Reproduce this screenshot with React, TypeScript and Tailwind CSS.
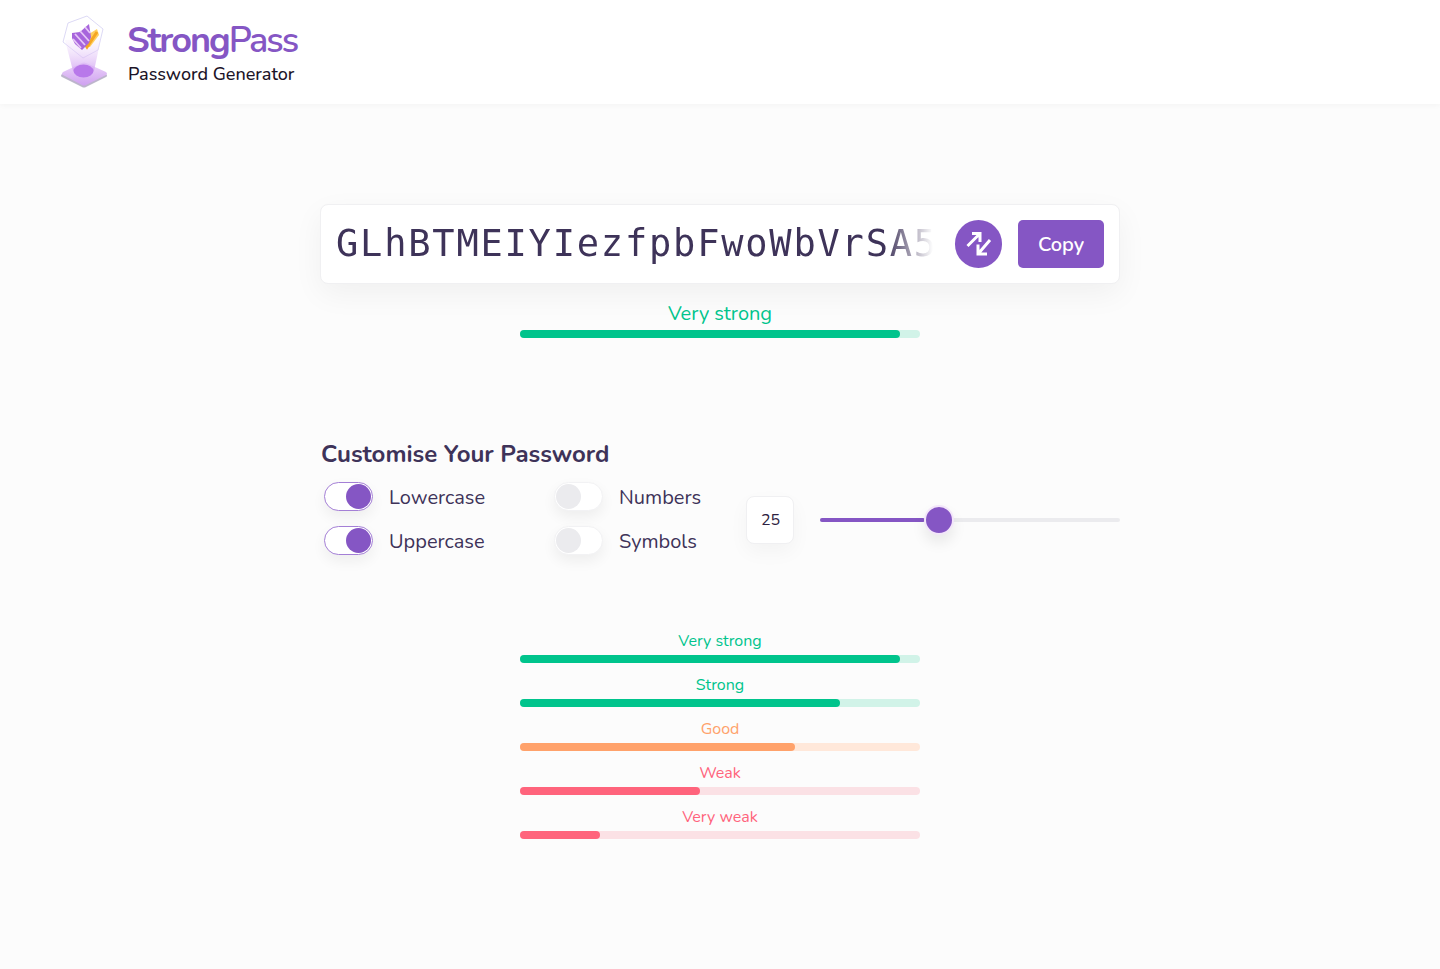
import { ReactNode } from 'react'

const strengths = [
  { label: 'Very strong', width: 'w-[380px]', text: 'text-[#00c48c]', bar: 'bg-[#00c48c]', track: 'bg-[#d1f3e8]' },
  { label: 'Strong', width: 'w-[320px]', text: 'text-[#00c48c]', bar: 'bg-[#00c48c]', track: 'bg-[#d1f3e8]' },
  { label: 'Good', width: 'w-[275px]', text: 'text-[#ffa26b]', bar: 'bg-[#ffa26b]', track: 'bg-[#ffe8da]' },
  { label: 'Weak', width: 'w-[180px]', text: 'text-[#ff647c]', bar: 'bg-[#ff647c]', track: 'bg-[#fbe1e5]' },
  { label: 'Very weak', width: 'w-[80px]', text: 'text-[#ff647c]', bar: 'bg-[#ff647c]', track: 'bg-[#fbe1e5]' },
]

function Logo() {
  return (
    <svg width="50" height="76" viewBox="0 0 50 76" fill="none">
      <defs>
        <linearGradient id="beam" x1="0" y1="0" x2="0" y2="1">
          <stop offset="0" stopColor="#f3e6fb" stopOpacity="0.2" />
          <stop offset="1" stopColor="#cf9df2" stopOpacity="0.85" />
        </linearGradient>
        <linearGradient id="plate" x1="0" y1="0" x2="0" y2="1">
          <stop offset="0" stopColor="#ecd6fa" />
          <stop offset="1" stopColor="#cfa0f0" />
        </linearGradient>
      </defs>
      <path d="M3 60 L23 50 Q25 49 27 50 L47 60 Q49 62 47 63 L27 73 Q25 74 23 73 L3 63 Q1 62 3 60 Z" fill="#bdb5cc" />
      <path d="M4 58 L23 49 Q25 48 27 49 L47 58 Q49 60 47 61 L27 71 Q25 72 23 71 L4 61 Q2 60 4 58 Z" fill="url(#plate)" />
      <path d="M28 2 L44 15 L39 36 L24 44 L4 28 L9 9 Z" fill="#fff" stroke="#cdc8f0" strokeWidth="0.7" />
      <path d="M6 26 L42 24 L35 57 Q25 63 14 57 Z" fill="url(#beam)" />
      <ellipse cx="24.5" cy="57" rx="10" ry="6.5" fill="#b878ea" />
      <path d="M30 20 L38 15 L40 21 L31 33 L27 33 Z" fill="#ffd060" />
      <path d="M24 27 L28 33 L38 18" stroke="#f5a623" strokeWidth="3" />
      <path d="M13 19 L21 18 L30 10 L32 23 L30 29 L23 36 L16 30 L13 24 Z" fill="#a765dc" />
      <path d="M16 20 L26 31 M21 17 L30 27 M14 25 L22 34 M26 13 L31 19" stroke="#e6c6f7" strokeWidth="1.8" />
    </svg>
  )
}

function Toggle({ on, label }: { on?: boolean; label: string }) {
  return (
    <div className="flex items-center">
      <div
        className={`flex h-[29px] w-[49px] items-center rounded-full border bg-white p-[1px] shadow-[0_6px_14px_rgba(0,0,0,0.06)] ${
          on ? 'justify-end border-[#a47fd6]' : 'justify-start border-[#f2f2f4]'
        }`}
      >
        <div className={`h-[25px] w-[25px] rounded-full ${on ? 'bg-[#8556c4]' : 'bg-[#ebebee]'}`} />
      </div>
      <span className="ml-4 pt-[4px] text-[20px] leading-[28px] text-[#3e3359]">{label}</span>
    </div>
  )
}

function Meter({ label, width, text, bar, track, size }: { label: ReactNode; width: string; text: string; bar: string; track: string; size: string }) {
  return (
    <div className="flex w-[400px] flex-col items-center">
      <div className={`${size} ${text}`}>{label}</div>
      <div className={`h-2 w-full rounded-full ${track}`}>
        <div className={`h-2 rounded-full ${bar} ${width}`} />
      </div>
    </div>
  )
}

export default function App() {
  return (
    <div className="min-h-[969px] bg-[#fcfcfc] font-['Nunito','Lato','Noto_Sans',sans-serif]">
      <header className="flex h-[104px] items-center bg-white pl-[59px] shadow-[0_1px_6px_rgba(0,0,0,0.04)]">
        <Logo />
        <div className="ml-[19px]">
          <div className="-ml-[1px] pt-[3px] text-[36px] font-bold leading-[40px] tracking-[-2px] text-[#8556c4]">
            Strong<span className="font-semibold">Pass</span>
          </div>
          <div className="mt-[1px] text-[18px] font-medium leading-[24px] text-[#1c1428]">Password Generator</div>
        </div>
      </header>

      <main className="flex flex-col items-center">
        <div className="mt-[100px] flex h-[80px] w-[800px] items-center rounded-lg border border-[#f0f0f2] bg-white px-[15px] shadow-[0_10px_30px_rgba(0,0,0,0.05)]">
          <div className="w-[598px] overflow-hidden whitespace-nowrap font-['DejaVu_Sans_Mono',monospace] text-[37px] tracking-[1.8px] text-[#3e3359] [mask-image:linear-gradient(to_right,#000_92%,transparent_100%)]">
            GLhBTMEIYIezfpbFwoWbVrSA5
          </div>
          <button className="ml-[22px] flex h-12 w-[47px] items-center justify-center rounded-full bg-[#8556c4]">
            <svg width="26" height="26" viewBox="0 0 26 26" fill="none" stroke="#fff" strokeWidth="3">
              <path d="M1.5 15 L14 2.5 M6 2.5 H14 V11" />
              <path d="M24 9 L12 23 M12 13.5 V23 H21" />
            </svg>
          </button>
          <button className="ml-4 h-12 w-[86px] rounded-[5px] bg-[#8556c4] pt-[2px] text-[20px] font-semibold text-white">Copy</button>
        </div>

        <div className="mt-4">
          <Meter label="Very strong" width="w-[380px]" text="text-[#00c48c]" bar="bg-[#00c48c]" track="bg-[#d1f3e8]" size="text-[20px] leading-[28px] mb-[2px]" />
        </div>

        <div className="mt-[100px] w-[800px]">
          <h2 className="pl-[1px] text-[24px] font-bold leading-[32px] text-[#3e3359]">Customise Your Password</h2>
          <div className="mt-[10px] flex items-center">
            <div className="mb-[4px] grid grid-cols-[230px_190px] gap-y-[12px] pl-1">
              <Toggle on label="Lowercase" />
              <Toggle label="Numbers" />
              <Toggle on label="Uppercase" />
              <Toggle label="Symbols" />
            </div>
            <div className="ml-[2px] flex h-12 w-12 items-center justify-center rounded-lg border border-[#f0f0f2] bg-white pl-[1px] text-[16px] text-[#2d2140] shadow-[0_8px_20px_rgba(0,0,0,0.04)]">
              25
            </div>
            <div className="relative ml-[26px] h-1 w-[300px] rounded-full bg-[#ebebee]">
              <div className="h-1 w-[105px] rounded-full bg-[#8556c4]" />
              <div className="absolute left-[104px] top-[-13px] h-[30px] w-[30px] rounded-full border-2 border-[#f3e6fa] bg-[#8556c4] shadow-[0_8px_14px_rgba(0,0,0,0.08)]" />
            </div>
          </div>
        </div>

        <div className="mt-[68px] flex flex-col gap-y-[9px]">
          {strengths.map((s) => (
            <Meter key={s.label} {...s} size="text-[16px] leading-[26px] mb-[1px]" />
          ))}
        </div>
      </main>
    </div>
  )
}
